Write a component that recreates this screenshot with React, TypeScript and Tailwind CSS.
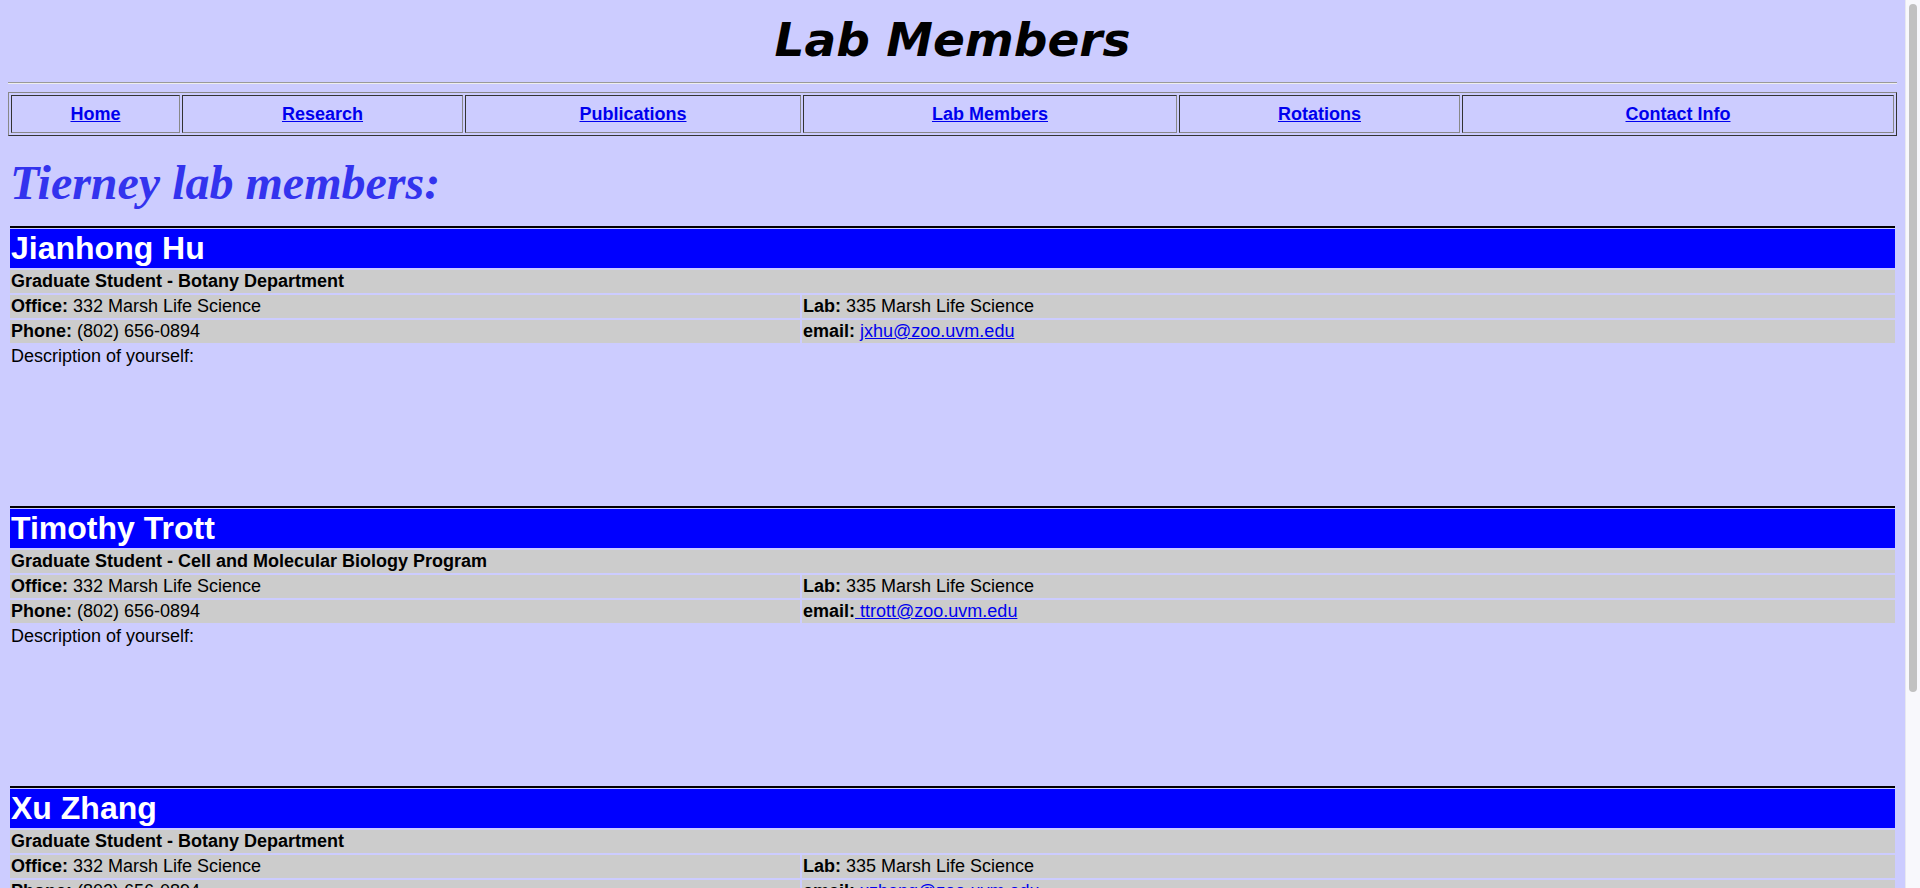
const navLinks = [
  { label: "Home", width: "w-[169px]" },
  { label: "Research", width: "w-[281px]" },
  { label: "Publications", width: "w-[336px]" },
  { label: "Lab Members", width: "w-[374px]" },
  { label: "Rotations", width: "w-[281px]" },
  { label: "Contact Info", width: "flex-1" },
];

const members = [
  {
    name: "Jianhong Hu",
    position: "Graduate Student - Botany Department",
    office: "332 Marsh Life Science",
    lab: "335 Marsh Life Science",
    phone: "(802) 656-0894",
    email: "jxhu@zoo.uvm.edu",
    spaceInLink: false,
  },
  {
    name: "Timothy Trott",
    position: "Graduate Student - Cell and Molecular Biology Program",
    office: "332 Marsh Life Science",
    lab: "335 Marsh Life Science",
    phone: "(802) 656-0894",
    email: "ttrott@zoo.uvm.edu",
    spaceInLink: true,
  },
  {
    name: "Xu Zhang",
    position: "Graduate Student - Botany Department",
    office: "332 Marsh Life Science",
    lab: "335 Marsh Life Science",
    phone: "(802) 656-0894",
    email: "xzhang@zoo.uvm.edu",
    spaceInLink: false,
  },
];

type Member = (typeof members)[number];

const MemberCard = ({ member }: { member: Member }) => {
  return (
    <div className="flex flex-col h-[280px] px-[2px]">
      <div className="h-[2px] bg-black" />
      <div className="mt-[1px] flex flex-col gap-[2px]">
        <div className="bg-[#0000ff] text-white font-bold text-[32px] leading-[37px] py-[1px] px-[1px]">
          {member.name}
        </div>
        <div className="bg-[#cccccc] font-bold py-[1px] px-[1px]">
          {member.position}
        </div>
        <div className="flex gap-[2px]">
          <div className="w-[790px] bg-[#cccccc] py-[1px] px-[1px]">
            <b>Office:</b> {member.office}
          </div>
          <div className="flex-1 bg-[#cccccc] py-[1px] px-[1px]">
            <b>Lab:</b> {member.lab}
          </div>
        </div>
        <div className="flex gap-[2px]">
          <div className="w-[790px] bg-[#cccccc] py-[1px] px-[1px]">
            <b>Phone:</b> {member.phone}
          </div>
          <div className="flex-1 bg-[#cccccc] py-[1px] px-[1px] whitespace-pre">
            <b>email:</b>
            {member.spaceInLink ? "" : " "}
            <a href="#" className="text-[#0000ee] underline">
              {member.spaceInLink ? " " : ""}
              {member.email}
            </a>
          </div>
        </div>
        <div className="py-[1px] px-[1px]">Description of yourself:</div>
      </div>
    </div>
  );
};

export default function App() {
  return (
    <div className="flex h-screen bg-[#ccccff] text-black font-['Liberation_Sans',Arial,sans-serif] text-[18px] leading-[21px]">
      <div className="flex-1 overflow-y-hidden">
        <div className="px-2 pb-[80px]">
          <div className="pt-[12px] text-center font-['DejaVu_Sans',Verdana,sans-serif] font-bold italic text-[47px] leading-[56px]">
            Lab Members
          </div>
          <div className="mt-[14px] border-t border-t-[#9a9a9a] border-b border-b-[#eeeeee]" />

          <div className="mt-[8px] border border-t-[#888888] border-l-[#888888] border-b-[#333333] border-r-[#333333] p-[2px] flex gap-[2px]">
            {navLinks.map((link) => (
              <div
                key={link.label}
                className={`${link.width} h-[38px] flex items-center justify-center border border-t-[#333333] border-l-[#333333] border-b-[#888888] border-r-[#888888]`}
              >
                <a href="#" className="text-[#0000ee] underline font-bold">
                  {link.label}
                </a>
              </div>
            ))}
          </div>

          <h2 className="mt-[19px] px-[2px] font-['Liberation_Serif','Times_New_Roman',serif] font-bold italic text-[48px] leading-[55px] text-[#3333ee]">
            Tierney lab members:
          </h2>

          <div className="mt-[16px] flex flex-col">
            {members.map((member) => (
              <MemberCard key={member.name} member={member} />
            ))}
          </div>
        </div>
      </div>
      {/* scrollbar track */}
      <div className="w-[15px] bg-[#f8f8fc] border-l border-l-[#e8e8f0] pt-[4px] px-[3px]">
        <div className="h-[688px] rounded-full bg-[#c1c1c1]" />
      </div>
    </div>
  );
}
